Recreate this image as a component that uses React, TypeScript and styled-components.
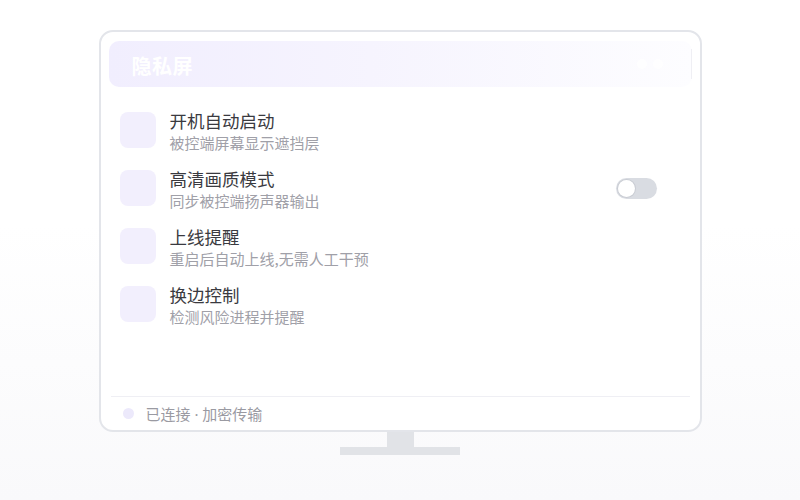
import React from "react";
import styled, { createGlobalStyle } from "styled-components";

const Global = createGlobalStyle`
  html, body { margin: 0; padding: 0; }
  body {
    width: 800px; height: 500px; overflow: hidden;
    background: linear-gradient(180deg, #ffffff 0%, #ffffff 45%, #f9f9fb 100%);
    font-family: "Noto Sans CJK SC", "Noto Sans", sans-serif;
  }
`;

const Stage = styled.div`
  width: 800px; height: 500px;
  display: flex; flex-direction: column; align-items: center;
  padding-top: 30px; box-sizing: border-box;
`;

const Screen = styled.div`
  width: 603px; height: 402px; box-sizing: border-box;
  border: 2px solid #e3e5ea; border-radius: 14px; background: #fff;
  padding: 9px 8px 0 8px;
  display: flex; flex-direction: column;
`;

const Header = styled.div`
  height: 46px; border-radius: 10px;
  background: linear-gradient(90deg, #f1eefe 0%, #f6f4fe 45%, #fdfdff 100%);
  display: flex; align-items: center; padding: 0 0 0 23px;
`;

const Title = styled.div`
  color: #fff; font-size: 20px; font-weight: 700; letter-spacing: 0.5px;
  margin-top: 2px;
`;

const HeaderTools = styled.div`
  margin-left: auto; display: flex; align-items: center; gap: 6px;
  height: 100%;
`;

const Dot = styled.span`
  width: 10px; height: 10px; border-radius: 50%; background: #fff; opacity: 0.7;
`;

const VLine = styled.span`
  width: 1px; height: 30px; background: #efeff4; margin-left: 22px;
`;

const List = styled.div`
  display: flex; flex-direction: column; gap: 22px; padding: 25px 0 0 11px;
  flex: 1;
`;

const Row = styled.div`
  display: flex; align-items: center; height: 36px;
`;

const IconBox = styled.div`
  width: 36px; height: 36px; border-radius: 8px; background: #f2effd; flex: none;
`;

const Texts = styled.div`
  margin-left: 14px; margin-top: 3px; display: flex; flex-direction: column;
`;

const RowTitle = styled.div`
  font-size: 17.5px; color: #3a3a40; line-height: 22px; font-weight: 400;
`;

const RowSub = styled.div`
  font-size: 15px; color: #a0a0a8; line-height: 21px;
`;

const Toggle = styled.div`
  margin-left: auto; margin-right: 35px;
  width: 41px; height: 21px; border-radius: 11px; background: #d9dce2;
  display: flex; align-items: center; padding: 0 2px; box-sizing: border-box;
`;

const Knob = styled.div`
  width: 17px; height: 17px; border-radius: 50%; background: #fff;
  box-shadow: 0 0 0 1px #c9ccd3;
`;

const Footer = styled.div`
  margin: 0 2px; border-top: 1px solid #efeff4; height: 33px;
  display: flex; align-items: center; padding-left: 12px; gap: 12px;
`;

const StatusDot = styled.span`
  width: 11px; height: 11px; border-radius: 50%; background: #ece9fb;
`;

const FooterText = styled.span`
  font-family: "Noto Sans", "Noto Sans CJK SC", sans-serif;
  font-size: 15px; color: #9a9aa2;
`;

const Neck = styled.div`
  width: 27px; height: 15px; background: #e1e3e7;
`;

const Base = styled.div`
  width: 120px; height: 8px; background: #e1e3e7;
`;

const rows = [
  { t: "开机自动启动", s: "被控端屏幕显示遮挡层", toggle: false },
  { t: "高清画质模式", s: "同步被控端扬声器输出", toggle: true },
  { t: "上线提醒", s: "重启后自动上线,无需人工干预", toggle: false },
  { t: "换边控制", s: "检测风险进程并提醒", toggle: false },
];

export default function App() {
  return (
    <>
      <Global />
      <Stage>
        <Screen>
          <Header>
            <Title>隐私屏</Title>
            <HeaderTools>
              <Dot />
              <Dot />
              <VLine />
            </HeaderTools>
          </Header>
          <List>
            {rows.map((r) => (
              <Row key={r.t}>
                <IconBox />
                <Texts>
                  <RowTitle>{r.t}</RowTitle>
                  <RowSub>{r.s}</RowSub>
                </Texts>
                {r.toggle && (
                  <Toggle>
                    <Knob />
                  </Toggle>
                )}
              </Row>
            ))}
          </List>
          <Footer>
            <StatusDot />
            <FooterText>已连接 · 加密传输</FooterText>
          </Footer>
        </Screen>
        <Neck />
        <Base />
      </Stage>
    </>
  );
}
